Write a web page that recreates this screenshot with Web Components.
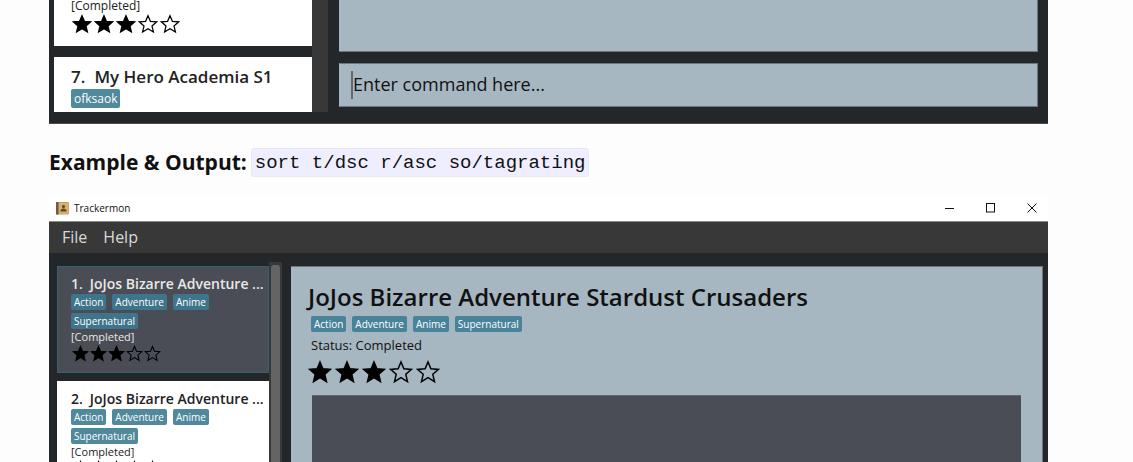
<!DOCTYPE html>
<html lang="en">
<head>
<meta charset="utf-8">
<title>Trackermon User Guide</title>
<style>
  body { margin: 0; background: #fdfdfd; color: #111; font-family: "Open Sans", "Noto Sans", sans-serif; }
</style>
</head>
<body>
<guide-page></guide-page>
<script>
const define = (name, html, setup) => {
  const template = document.createElement('template');
  template.innerHTML = html;
  customElements.define(name, class extends HTMLElement {
    constructor() {
      super();
      this.attachShadow({ mode: 'open' }).append(template.content.cloneNode(true));
    }
    connectedCallback() { if (setup) setup(this, this.shadowRoot); }
  });
};

define('star-rating', `
  <style>
    :host { display: flex; gap: var(--star-gap, 1px); }
    svg { display: block; width: var(--star-size, 17px); height: var(--star-size, 17px); }
    path { stroke: #000; stroke-width: 1.5; stroke-linejoin: miter; fill: none; }
    .full { fill: #000; }
  </style>`, (host, root) => {
    const value = Number(host.getAttribute('value'));
    host.setAttribute('role', 'img');
    host.setAttribute('aria-label', value + ' out of 5');
    root.querySelectorAll('svg').forEach(s => s.remove());
    for (let i = 0; i < 5; i++) {
      root.append(document.createRange().createContextualFragment(
        `<svg viewBox="0 0 24 24"><path class="${i < value ? 'full' : ''}" d="M12 2 L14.9 8.8 L22.4 9.4 L16.8 14.3 L18.5 21.6 L12 17.7 L5.5 21.6 L7.2 14.3 L1.6 9.4 L9.1 8.8 Z"/></svg>`));
    }
  });

define('show-tag', `
  <style>
    :host { display: block; box-sizing: border-box; height: var(--tag-height, 16px); padding: 0 3px;
      border-radius: 2px; background: var(--tag-bg, #50889c); color: #fff;
      font-size: var(--tag-font, 10px); line-height: var(--tag-height, 16px); white-space: nowrap; }
  </style><slot></slot>`);

define('show-card', `
  <style>
    :host { display: block; flex: none; box-sizing: border-box; border: 1px solid #fff; background: #fff;
      color: #222; padding: 7px 4px 10px 13px; }
    :host([selected]) { background: #4a4d55; border-color: #336172; color: #e8e8e8; --tag-bg: #3f758a; }
    .title { display: flex; gap: var(--title-gap, 7px); font-weight: 600; font-size: var(--title-font, 14px);
      line-height: var(--title-line, 19px); white-space: nowrap; }
    .tags { display: flex; flex-wrap: wrap; gap: 3px 6px; margin-top: 1px; }
    .status { min-height: 16px; font-size: var(--status-font, 11px); line-height: 16px; }
    star-rating { margin-left: 1px; }
  </style>
  <div class="title"><span><slot name="number"></slot></span><span><slot name="name"></slot></span></div>
  <div class="tags"><slot></slot></div>
  <div class="status"><slot name="status"></slot></div>
  <star-rating value="3"></star-rating>`);

define('command-box', `
  <style>
    :host { display: flex; align-items: center; box-sizing: border-box; height: 44px; padding: 0 11px;
      background: #a7b7c2; border: 1px solid #6b757c; border-left-color: #a7b7c2; }
    .caret { flex: none; width: 2px; height: 28px; background: #60696f; }
    input { flex: 1; min-width: 0; border: 0; padding: 0 0 2px; background: none; outline: 0;
      font: 18px/28px "Open Sans", "Noto Sans", sans-serif; color: #111; }
    input::placeholder { color: #111; opacity: 1; }
  </style>
  <span class="caret"></span>
  <input type="text" placeholder="Enter command here..." aria-label="Command">`);

define('results-view', `
  <style>
    :host { display: flex; height: 124px; box-sizing: border-box; padding: 0 10px 11px 5px; overflow: hidden;
      background: #23272a; border-bottom: 1px solid #4b4b4b;
      --title-font: 17px; --title-line: 23px; --title-gap: 9px; --tag-height: 19px; --tag-font: 12px;
      --status-font: 12px; --star-size: 20px; --star-gap: 2px; }
    .list { flex: 0 0 258px; display: flex; flex-direction: column; gap: 11px; }
    .previous { height: 46px; display: flex; flex-direction: column; justify-content: flex-end; overflow: hidden; }
    .next { height: 55px; overflow: hidden; }
    show-card { padding-left: 16px; }
    .previous show-card { padding-bottom: 11px; }
    .next show-card { padding-top: 7px; }
    .track { flex: 0 0 16px; margin-right: 11px; background: #383838; }
    .main { flex: 1; min-width: 0; display: flex; flex-direction: column; gap: 11px; }
    .panel { height: 52px; box-sizing: border-box; background: #a7b7c2; border: 1px solid #6b757c; border-width: 0 1px 1px 0; }
  </style>
  <div class="list">
    <div class="previous"><show-card><span slot="status">[Completed]</span></show-card></div>
    <div class="next"><show-card>
      <span slot="number">7.</span><span slot="name">My Hero Academia S1</span>
      <show-tag>ofksaok</show-tag>
    </show-card></div>
  </div>
  <div class="track"></div>
  <div class="main"><div class="panel"></div><command-box></command-box></div>`);

define('guide-example', `
  <style>
    :host { display: flex; align-items: center; gap: 4px; margin: 24px 0 20px; height: 29px; }
    b { font-size: 21px; line-height: 29px; white-space: nowrap; }
    code { box-sizing: border-box; height: 29px; padding: 0 3px; border: 1px solid #e8e8ee; border-radius: 3px;
      background: #eeeeff; font: 19px/29px "Liberation Mono", monospace; white-space: nowrap; }
  </style>
  <b><slot></slot></b><code><slot name="code"></slot></code>`);

define('title-bar', `
  <style>
    :host { display: flex; align-items: center; box-sizing: border-box; height: 25px; padding-bottom: 2px;
      background: #fff; border-bottom: 1px solid #8a8a8a; font-size: 10px; color: #111; }
    svg { display: block; }
    .logo { margin: 0 5px 0 7px; }
    .name { flex: 1; line-height: 20px; }
    button { width: 41px; height: 22px; border: 0; padding: 0 0 0 8px; background: none; display: grid; place-items: center; }
  </style>
  <svg class="logo" width="13" height="13" viewBox="0 0 13 13">
    <rect width="13" height="12.5" rx="1" fill="#c9a062"/><rect y="0" width="2.5" height="12.5" fill="#6f5a4b"/>
    <rect x="3" y="1" width="9.500" height="10.500" fill="#d8b16f"/>
    <circle cx="7.500" cy="4.500" r="1.600" fill="#5c4732"/><path d="M4.500 9.500V8L6.700 6.500H8.300L10.500 8V9.500Z" fill="#5c4732"/>
  </svg>
  <span class="name"><slot></slot></span>
  <button aria-label="Minimize"><svg width="10" height="10"><path d="M0 5.500H9" stroke="#111"/></svg></button>
  <button aria-label="Maximize"><svg width="10" height="10"><rect x=".5" y=".5" width="8" height="8.500" fill="none" stroke="#111"/></svg></button>
  <button aria-label="Close"><svg width="10" height="10"><path d="M.5 .5L9.500 9.500M9.500 .5L.5 9.500" stroke="#111"/></svg></button>`);

define('menu-bar', `
  <style>
    :host { display: flex; align-items: flex-start; gap: 16px; height: 31px; padding: 0 13px; background: #383838; }
    button { border: 0; padding: 0; background: none; color: #d8d8d8; font: 16px/30px "Open Sans", "Noto Sans", sans-serif; }
  </style>
  <button>File</button><button>Help</button>`);

define('show-detail', `
  <style>
    :host { display: flex; flex-direction: column; box-sizing: border-box; padding: 13px 21px 0 17px;
      background: #a7b7c2; border: 1px solid #6b757c; border-left: 0; color: #111; --tag-bg: #49839a; }
    h2 { margin: 0; font-size: 24px; line-height: 34px; font-weight: 600; white-space: nowrap; }
    .tags { display: flex; gap: 6px; margin: 2px 0 0 3px; }
    .status { margin-left: 3px; font-size: 13px; line-height: 26px; }
    star-rating { --star-size: 24px; --star-gap: 3px; margin-top: 2px; }
    .notes { flex: 1; margin: 11px 0 0 4px; background: #4a4d55; border-top: 1px solid #60666c; }
  </style>
  <h2><slot name="name"></slot></h2>
  <div class="tags"><slot></slot></div>
  <div class="status"><slot name="status"></slot></div>
  <star-rating value="3"></star-rating>
  <div class="notes"></div>`);

define('app-window', `
  <style>
    :host { display: flex; flex-direction: column; flex: 1 0 auto; min-height: 290px; background: #23272a; }
    .content { flex: 1; min-height: 0; display: flex; padding: 9px 5px 0 8px; overflow: hidden; }
    .list { flex: 0 0 212px; display: flex; flex-direction: column; gap: 8px; padding-top: 4px; }
    .track { flex: 0 0 13px; box-sizing: border-box; padding: 3px 2px 0; margin-right: 9px; background: #383838; }
    .thumb { height: 100%; border-radius: 3px 3px 0 0; background: #646464; }
    show-detail { flex: 1; min-width: 0; margin-top: 4px; }
  </style>
  <title-bar>Trackermon</title-bar>
  <menu-bar></menu-bar>
  <div class="content">
    <div class="list">
      <show-card selected>
        <span slot="number">1.</span><span slot="name">JoJos Bizarre Adventure ...</span>
        <show-tag>Action</show-tag><show-tag>Adventure</show-tag><show-tag>Anime</show-tag><show-tag>Supernatural</show-tag>
        <span slot="status">[Completed]</span>
      </show-card>
      <show-card>
        <span slot="number">2.</span><span slot="name">JoJos Bizarre Adventure ...</span>
        <show-tag>Action</show-tag><show-tag>Adventure</show-tag><show-tag>Anime</show-tag><show-tag>Supernatural</show-tag>
        <span slot="status">[Completed]</span>
      </show-card>
    </div>
    <div class="track"><div class="thumb"></div></div>
    <show-detail>
      <span slot="name">JoJos Bizarre Adventure Stardust Crusaders</span>
      <show-tag>Action</show-tag><show-tag>Adventure</show-tag><show-tag>Anime</show-tag><show-tag>Supernatural</show-tag>
      <span slot="status">Status: Completed</span>
    </show-detail>
  </div>`);

define('guide-page', `
  <style>
    :host { display: flex; flex-direction: column; box-sizing: border-box; height: 100vh; overflow: hidden; padding: 0 85px 0 49px; }
    results-view, guide-example { flex: none; }
  </style>
  <results-view></results-view>
  <guide-example>Example &amp; Output:<span slot="code">sort t/dsc r/asc so/tagrating</span></guide-example>
  <app-window></app-window>`);
</script>
</body>
</html>
